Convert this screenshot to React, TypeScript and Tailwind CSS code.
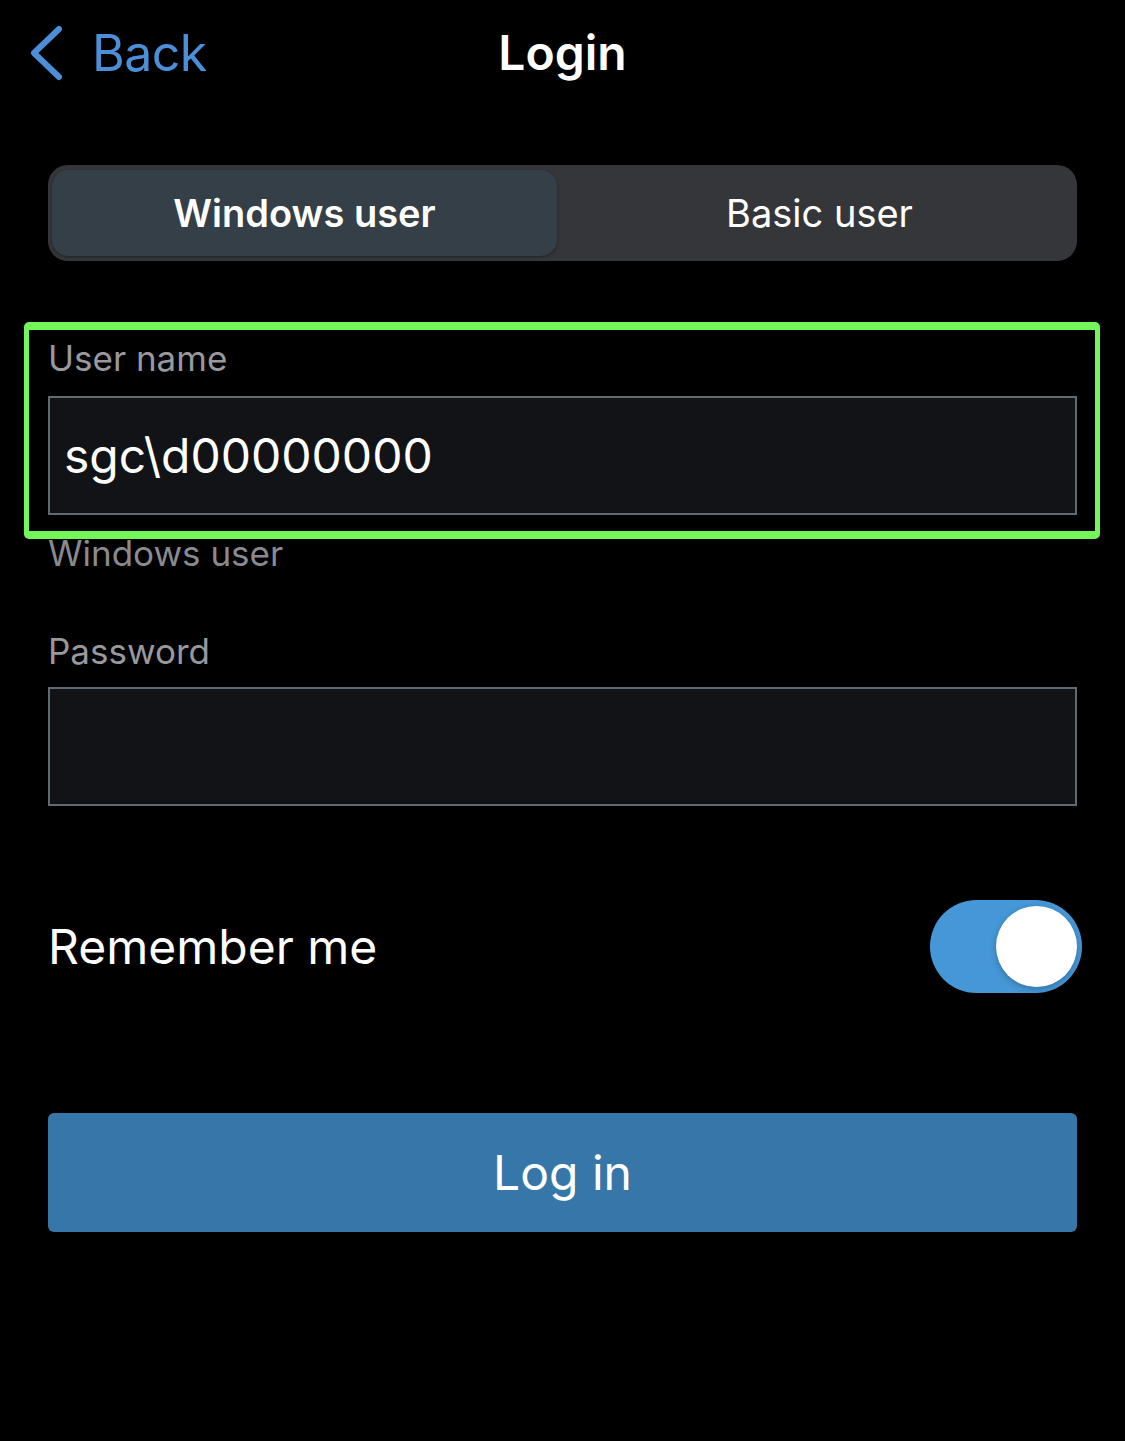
import { useState } from "react";

function BackChevron() {
  return (
    <svg width="36" height="56" viewBox="0 0 36 56" fill="none" className="shrink-0">
      <polyline
        points="31,4 6,28 31,52"
        stroke="#4a8fd8"
        strokeWidth="6"
        strokeLinecap="round"
        strokeLinejoin="round"
      />
    </svg>
  );
}

function Toggle({ on, onChange }: { on: boolean; onChange: () => void }) {
  return (
    <button
      type="button"
      onClick={onChange}
      className={`-mr-[5px] flex h-[93px] w-[152px] items-center rounded-full px-[5px] ${
        on ? "justify-end bg-[#4597d7]" : "justify-start bg-[#3a3c40]"
      }`}
    >
      <span className="block h-[81px] w-[81px] rounded-full bg-white shadow-[0_2px_6px_rgba(0,0,0,0.25)]" />
    </button>
  );
}

export default function App() {
  const [mode, setMode] = useState<"windows" | "basic">("windows");
  const [remember, setRemember] = useState(true);

  return (
    <div className="min-h-[1441px] w-full bg-black font-['Inter',sans-serif] text-white">
      {/* Nav bar */}
      <div className="grid h-[105px] grid-cols-[1fr_auto_1fr] items-center px-[28px]">
        <div className="flex items-center gap-[28px] text-[#4a8fd8]">
          <BackChevron />
          <span className="text-[50px] leading-none tracking-[-0.5px]">Back</span>
        </div>
        <h1 className="text-[48px] font-semibold leading-none">Login</h1>
        <div />
      </div>

      <div className="flex flex-col px-12">
        {/* Segmented control */}
        <div className="mt-[60px] grid h-[96px] grid-cols-2 gap-[10px] rounded-[20px] bg-[#34363a] py-[5px] pl-[4px] pr-[5px]">
          <button
            type="button"
            onClick={() => setMode("windows")}
            className={`rounded-[16px] text-[38px] ${
              mode === "windows" ? "bg-[#343f47] font-semibold shadow-[0_1px_3px_rgba(0,0,0,0.4)]" : ""
            }`}
          >
            Windows user
          </button>
          <button
            type="button"
            onClick={() => setMode("basic")}
            className={`rounded-[16px] text-[38px] ${
              mode === "basic" ? "bg-[#343f47] font-semibold shadow-[0_1px_3px_rgba(0,0,0,0.4)]" : ""
            }`}
          >
            Basic user
          </button>
        </div>

        {/* User name field (highlighted) */}
        <div className="relative mt-[76px]">
          <label className="block text-[35px] leading-[42px] text-[#98989d]">User name</label>
          <div className="mt-[17px] flex h-[119px] items-center border-2 border-[#5f6a72] bg-[#111316] px-[14px]">
            <span className="text-[48px] leading-none">sgc\d00000000</span>
          </div>
          <span className="pointer-events-none absolute -top-[15px] -bottom-[24px] -left-6 -right-[23px] rounded-[5px] border-x-[5px] border-y-[8px] border-[#74f55a]" />
        </div>
        <p className="mt-[17px] text-[35px] leading-[42px] text-[#8a8a8e]">Windows user</p>

        {/* Password */}
        <label className="mt-[56px] block text-[35px] leading-[42px] text-[#98989d]">Password</label>
        <div className="mt-[15px] h-[119px] border-2 border-[#5f6a72] bg-[#111316]" />

        {/* Remember me */}
        <div className="mt-[94px] flex h-[93px] items-center justify-between">
          <span className="text-[48px] leading-none">Remember me</span>
          <Toggle on={remember} onChange={() => setRemember(!remember)} />
        </div>

        {/* Log in */}
        <button
          type="button"
          className="mt-[120px] h-[119px] rounded-[6px] bg-[#3776a8] text-[48px] text-white"
        >
          Log in
        </button>
      </div>
    </div>
  );
}
